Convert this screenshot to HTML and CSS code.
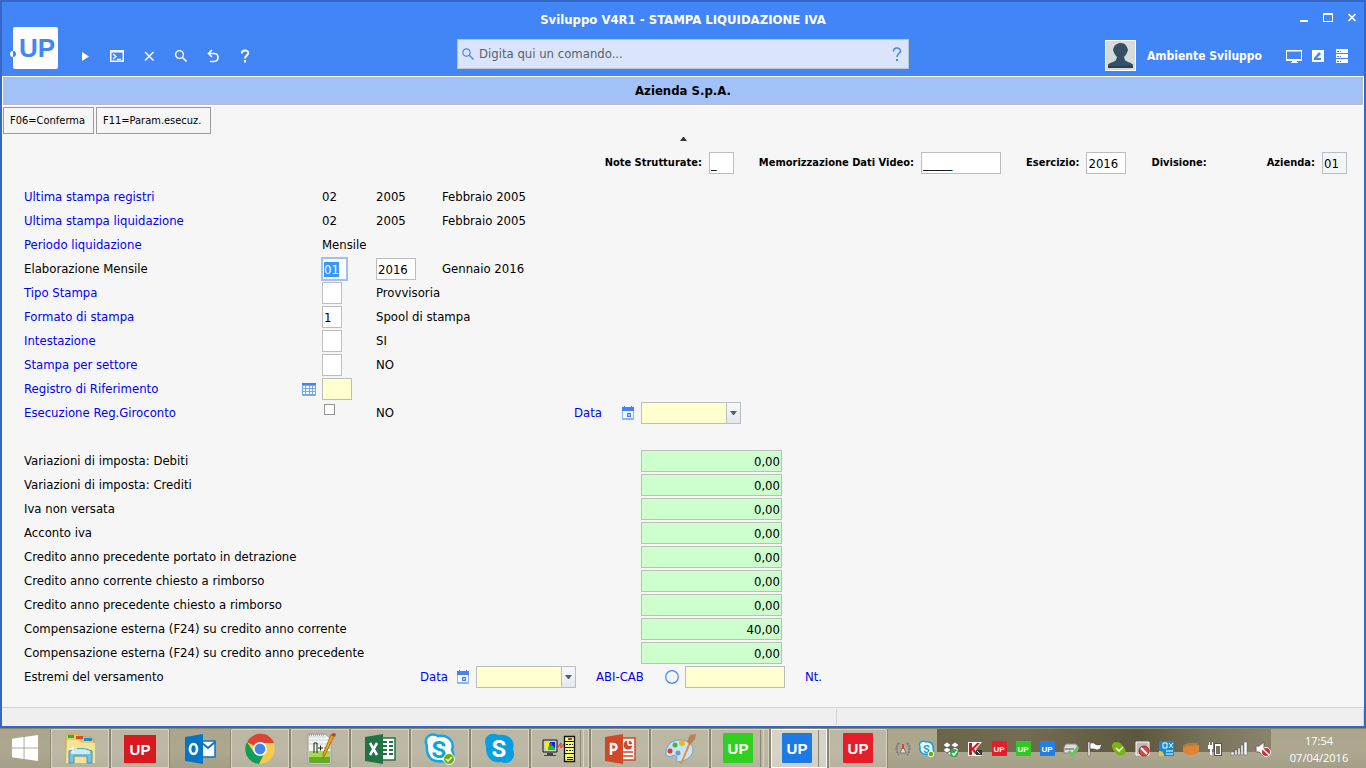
FILE: index.html
```html
<!DOCTYPE html>
<html lang="it">
<head>
<meta charset="utf-8">
<title>Sviluppo V4R1 - STAMPA LIQUIDAZIONE IVA</title>
<link rel="stylesheet" href="styles.css">
</head>
<body>
<svg class="defs" aria-hidden="true">
  <symbol id="calendar" viewBox="0 0 12 14"><path d="M0 2h12v12H0z" fill="#8db5fa"/><path d="M0 1h2V0h1v1h6V0h1v1h2v4H0z" fill="#3f83f5"/><path d="M1 5h10v7H1z" fill="#f5f7fc"/><path d="M5 7h4v4H5z" fill="#3f83f5"/><path d="M6 8h2v2H6z" fill="#a9c7fa"/></symbol>
  <symbol id="arrow" viewBox="0 0 7 4"><path d="M0 0h7L4 4H3z" fill="#585e66"/></symbol>
</svg>
<main class="window">
  <header class="header">
    <div class="brand">
      <svg class="logo" viewBox="0 0 49 42" role="img" aria-label="UP"><rect x="3" width="45" height="42" rx="2" fill="#fff"/><circle cx="3" cy="27" r="3" fill="#fff"/><path d="M3 24a3 3 0 0 1 0 6z" fill="#4285f6"/><text x="9" y="30" class="logo-text">UP</text></svg>
      <nav class="toolbar" aria-label="Strumenti">
        <button class="tool" aria-label="Esegui"><svg viewBox="0 0 16 16"><path d="M5 4v9l7-4.500z" fill="#fff"/></svg></button>
        <button class="tool" aria-label="Terminale"><svg viewBox="0 0 16 16"><path d="M1 2h14v12H1zM2.500 4.500v8h11v-8z" fill="#fff" fill-rule="evenodd"/><path d="M4 6l3 2.500L4 11M8 11.500h4" fill="none" stroke="#fff" stroke-width="1.300"/></svg></button>
        <button class="tool" aria-label="Chiudi"><svg viewBox="0 0 16 16"><path d="M4 4l8.500 8.500M12.500 4L4 12.500" stroke="#fff" stroke-width="1.500"/></svg></button>
        <button class="tool" aria-label="Cerca"><svg viewBox="0 0 16 16"><circle cx="6.500" cy="6.500" r="3.900" fill="none" stroke="#fff" stroke-width="1.400"/><path d="M9 9l4.500 4.500" stroke="#fff" stroke-width="1.700"/></svg></button>
        <button class="tool" aria-label="Annulla"><svg viewBox="0 0 16 16"><path d="M3.500 5.500H9a3.800 3.800 0 0 1 0 8H5" fill="none" stroke="#fff" stroke-width="1.700"/><path d="M7 2L3.500 5.500 7 9" fill="none" stroke="#fff" stroke-width="1.500"/></svg></button>
        <button class="tool" aria-label="Aiuto"><svg viewBox="0 0 16 16"><path d="M4.800 5.500c0-4 6.500-4 6.500-.4C11.300 7.500 8 7.500 8 10.500" fill="none" stroke="#fff" stroke-width="1.900"/><path d="M7 12h2v2.500H7z" fill="#fff"/></svg></button>
      </nav>
    </div>
    <h1 class="title">Sviluppo V4R1 - STAMPA LIQUIDAZIONE IVA</h1>
    <div class="window-controls">
      <button class="control" aria-label="Riduci"><svg viewBox="0 0 12 12"><path d="M2 9h8v2H2z" fill="#fff"/></svg></button>
      <button class="control" aria-label="Ingrandisci"><svg viewBox="0 0 12 12"><path d="M1 2h10v9H1zM2 4v6h8V4z" fill="#fff" fill-rule="evenodd"/></svg></button>
      <button class="control" aria-label="Chiudi finestra"><svg viewBox="0 0 12 12"><path d="M2.500 3l7 7M9.500 3l-7 7" stroke="#fff" stroke-width="1.700"/></svg></button>
    </div>
    <div class="search">
      <svg class="search-icon" viewBox="0 0 12 12"><circle cx="4.500" cy="4.500" r="3.700" fill="none" stroke="#4285f6" stroke-width="1.200"/><path d="M7.300 7.300L11.500 11.500" stroke="#4285f6" stroke-width="1.500"/></svg>
      <input class="search-input" type="text" aria-label="Comando" placeholder="Digita qui un comando...">
      <button class="search-help" aria-label="Aiuto comandi"><svg viewBox="0 0 10 14"><path d="M1.500 4.500c0-4.600 7-4.300 7-.7C8.500 6.600 5 6.500 5 10" fill="none" stroke="#4285f6" stroke-width="1.500"/><path d="M4 12h2v2H4z" fill="#4285f6"/></svg></button>
    </div>
    <div class="user">
      <svg class="avatar" viewBox="0 0 31 31"><path d="M0 0h31v31H0z" fill="#fff"/><path d="M1 1h29v29H1z" fill="#d9dadb"/><path d="M3 28v-3c0-2 7-3 8-5l1-3c-2-2-3-4-4-7 1-5 4-7 8-7s6 3 7 7c-1 3-2 5-4 7l1 3c1 2 8 3 8 5v3z" fill="#345064"/><path d="M3 26h25v2H3z" fill="#2a4052"/></svg>
      <span class="user-name">Ambiente Sviluppo</span>
      <button class="control" aria-label="Schermo"><svg viewBox="0 0 16 16"><path d="M0 2h16v11h-5v1h1v1H5v-1h1v-1H0zM1 3.500V11h14V3.500z" fill="#fff" fill-rule="evenodd"/></svg></button>
      <button class="control" aria-label="Modifica"><svg viewBox="0 0 16 16"><path d="M2 2h12v12H2z" fill="#fff"/><path d="M4 12v-2l5-6 2 2-4 4h4v2z" fill="#4285f6"/></svg></button>
      <button class="control" aria-label="Server"><svg viewBox="0 0 16 16"><path d="M2 1h12v4H2zM2 6h12v4H2zM2 11h12v4H2z" fill="#fff"/><path d="M3 3h2v1H3zM6 3h1v1H6zM3 8h2v1H3zM6 8h1v1H6zM3 13h2v1H3zM6 13h1v1H6z" fill="#4285f6"/></svg></button>
    </div>
  </header>

  <h2 class="company">Azienda S.p.A.</h2>
  <div class="actions">
    <button class="action">F06=Conferma</button>
    <button class="action action-wide">F11=Param.esecuz.</button>
  </div>
  <button class="collapse" aria-label="Comprimi"><svg viewBox="0 0 7 4"><path d="M0 4h7L4 0H3z" fill="#333"/></svg></button>

  <form class="content">
    <div class="context">
      <div class="context-item"><label for="note">Note Strutturate:</label><input class="field w-25" id="note" value="_"></div>
      <div class="context-item"><label for="memo">Memorizzazione Dati Video:</label><input class="field w-80" id="memo" value="_____"></div>
      <div class="context-item"><label for="esercizio">Esercizio:</label><input class="field w-40" id="esercizio" value="2016"></div>
      <div class="context-item context-division"><span>Divisione:</span></div>
      <div class="context-item"><label for="azienda">Azienda:</label><input class="field w-25 readonly" id="azienda" value="01" readonly></div>
    </div>

    <section class="rows">
      <div class="row"><span class="link">Ultima stampa registri</span><span></span><span>02</span><span>2005</span><span>Febbraio 2005</span></div>
      <div class="row"><span class="link">Ultima stampa liquidazione</span><span></span><span>02</span><span>2005</span><span>Febbraio 2005</span></div>
      <div class="row"><span class="link">Periodo liquidazione</span><span></span><span>Mensile</span></div>
      <div class="row"><label for="mese">Elaborazione Mensile</label><span></span><input class="field w-25 current" id="mese" value="01"><input class="field w-40" aria-label="Anno" value="2016"><span>Gennaio 2016</span></div>
      <div class="row"><label class="link" for="tipo">Tipo Stampa</label><span></span><input class="field w-20" id="tipo"><span>Provvisoria</span></div>
      <div class="row"><label class="link" for="formato">Formato di stampa</label><span></span><input class="field w-20" id="formato" value="1"><span>Spool di stampa</span></div>
      <div class="row"><label class="link" for="intestazione">Intestazione</label><span></span><input class="field w-20" id="intestazione"><span>SI</span></div>
      <div class="row"><label class="link" for="settore">Stampa per settore</label><span></span><input class="field w-20" id="settore"><span>NO</span></div>
      <div class="row"><label class="link" for="registro">Registro di Riferimento</label><svg class="grid-icon" viewBox="0 0 14 13"><rect width="14" height="13" rx="1" fill="#78a7f8"/><path d="M0 0h14v2H0z" fill="#3f83f5"/><path d="M1 3h2v2H1zM4 3h3v2H4zM8 3h2v2H8zM11 3h2v2h-2zM1 6h2v2H1zM4 6h3v2H4zM8 6h2v2H8zM11 6h2v2h-2zM1 9h2v2H1zM4 9h3v2H4zM8 9h2v2H8zM11 9h2v2h-2z" fill="#f6f9ff"/></svg><input class="field w-30 yellow" id="registro"></div>
      <div class="row"><label class="link" for="giroconto">Esecuzione Reg.Giroconto</label><span></span><input class="check" type="checkbox" id="giroconto"><span>NO</span><span></span><label class="link" for="data1">Data</label><svg class="calendar"><use href="#calendar"/></svg><span class="combo"><select class="select" id="data1"><option></option></select><span class="combo-arrow"><svg><use href="#arrow"/></svg></span></span></div>
    </section>

    <section class="amounts">
      <label for="a1">Variazioni di imposta: Debiti</label><input class="field amount" id="a1" value="0,00">
      <label for="a2">Variazioni di imposta: Crediti</label><input class="field amount" id="a2" value="0,00">
      <label for="a3">Iva non versata</label><input class="field amount" id="a3" value="0,00">
      <label for="a4">Acconto iva</label><input class="field amount" id="a4" value="0,00">
      <label for="a5">Credito anno precedente portato in detrazione</label><input class="field amount" id="a5" value="0,00">
      <label for="a6">Credito anno corrente chiesto a rimborso</label><input class="field amount" id="a6" value="0,00">
      <label for="a7">Credito anno precedente chiesto a rimborso</label><input class="field amount" id="a7" value="0,00">
      <label for="a8">Compensazione esterna (F24) su credito anno corrente</label><input class="field amount" id="a8" value="40,00">
      <label for="a9">Compensazione esterna (F24) su credito anno precedente</label><input class="field amount" id="a9" value="0,00">
    </section>

    <div class="payment">
      <span>Estremi del versamento</span>
      <label class="link" for="data2">Data</label><svg class="calendar"><use href="#calendar"/></svg><span class="combo"><select class="select" id="data2"><option></option></select><span class="combo-arrow"><svg><use href="#arrow"/></svg></span></span>
      <label class="link" for="abi">ABI-CAB</label><svg class="circle" viewBox="0 0 14 14"><circle cx="7" cy="7" r="6.300" fill="none" stroke="#4285f6" stroke-width="1.200"/></svg><input class="field w-100 yellow" id="abi">
      <span class="link">Nt.</span>
    </div>
  </form>
  <footer class="status"><span class="status-left"></span><span class="status-right"></span></footer>
</main>

<div class="taskbar">
  <button class="start" aria-label="Start"><svg viewBox="0 0 28 28"><path d="M0 4l12-2v11H0zM13 2l14-2v13H13zM0 14h12v11L0 23zM13 14h14v13l-14-2z" fill="#fff"/></svg></button>
  <div class="apps">
    <button class="app" aria-label="Esplora file"><svg viewBox="0 0 32 32"><path d="M2 4q0-3 3-3h9l2 3h10v3h4v22H2z" fill="#e8cc66" stroke="#c6a646"/><path d="M4 2h6v3H4z" fill="#1fb53c"/><path d="M12 3h7v3h-7z" fill="#d84b25"/><path d="M20 5h8v3h-8z" fill="#258bd0"/><path d="M3 7h12l2 3h14v20H2z" fill="#f6e496"/><path d="M3 24l5-9 20 2 2 8" fill="#f1d873"/><path d="M5 18q12-5 23 0v12h-5v-7H10v7H5z" fill="#79bfdf" stroke="#4198c5"/><path d="M7 18q10-4 19 0v3H7z" fill="#c9edfa"/><path d="M9 13v7M6 16h7" stroke="#fff"/></svg></button>
    <button class="app" aria-label="UP"><svg viewBox="0 0 32 32"><path d="M0 2h32v28H0z" fill="#da1820"/><text x="16" y="22" class="up">UP</text></svg></button>
    <button class="app plain" aria-label="Outlook"><svg viewBox="0 0 32 32"><path d="M18 8h13v16H18z" fill="#fff" stroke="#0874c5" stroke-width="1.500"/><path d="M18 10l6 5 7-6" fill="none" stroke="#0874c5" stroke-width="2"/><path d="M1 4l18-3v30L1 28z" fill="#0874c5"/><ellipse cx="9.500" cy="16" rx="3.500" ry="5" fill="none" stroke="#fff" stroke-width="2.700"/></svg></button>
    <button class="app" aria-label="Chrome"><svg viewBox="0 0 32 32"><circle cx="16" cy="16" r="14.700" fill="#f8cc4b"/><path d="M16 16L3 9C10-3 26-1 30 10H16z" fill="#db4437"/><path d="M3 9c-5 9 1 21 12 22l6-12-12-1z" fill="#0f9d58"/><circle cx="16" cy="16" r="7" fill="#fff"/><circle cx="16" cy="16" r="5.400" fill="#4285f4"/></svg></button>
    <button class="app" aria-label="Notepad++"><svg viewBox="0 0 32 32"><path d="M4 1h17l6 5v25H4z" fill="#f5f8f3" stroke="#999"/><path d="M5 18h21v12H5z" fill="#a4d94f"/><path d="M5 24h21v6H5z" fill="#65ac20"/><path d="M5 4h17M5 7h21M5 11h21" stroke="#c6d0da"/><path d="M5 2h16" stroke="#666" stroke-dasharray="1 1"/><path d="M10 20V10h3v10M14 15h5m-2.500-2.500v5m4-2.500h5m-2.500-2.500v5" fill="none" stroke="#172c12"/><path d="M30 3L21 22l-2 3v-4l8-19z" fill="#eca51f" stroke="#a97316"/><path d="M27 2l2-2 3 1-1 3z" fill="#bf3b40"/></svg></button>
    <button class="app" aria-label="Excel"><svg viewBox="0 0 32 32"><path d="M17 5h14v22H17z" fill="#fff" stroke="#217346" stroke-width="1.500"/><path d="M19 8h4v2h-4zM25 8h4v2h-4zM19 12h4v2h-4zM25 12h4v2h-4zM19 16h4v2h-4zM25 16h4v2h-4zM19 20h4v2h-4zM25 20h4v2h-4z" fill="#217346"/><path d="M1 4l18-3v30L1 28z" fill="#217346"/><path d="M6 10l7 12M13 10L6 22" stroke="#fff" stroke-width="2.500"/></svg></button>
    <button class="app" aria-label="Skype for Business"><svg viewBox="0 0 32 32"><path d="M3 13C-1 4 7-1 14 3c10-2 17 6 14 14 4 8-3 15-11 11C8 30 2 23 3 13z" fill="#fff" stroke="#0ba9e5" stroke-width="2.500"/><text x="15" y="25" class="skype blue">S</text><circle cx="25" cy="26" r="5.500" fill="#6aae0b" stroke="#fff"/><path d="M22 26l2 2 4-4" stroke="#fff" stroke-width="1.500" fill="none"/></svg></button>
    <button class="app" aria-label="Skype"><svg viewBox="0 0 32 32"><path d="M2 13C-2 4 7-2 14 2c11-2 18 6 15 14 4 9-4 17-12 13C8 31 1 24 2 13z" fill="#079fe0"/><text x="15" y="24" class="skype">S</text></svg></button>
    <button class="app stacked" aria-label="Emulatore"><svg viewBox="0 0 32 32"><path d="M1 7h14v12H1z" fill="#ccc" stroke="#111"/><path d="M4 9h9v8H4z" fill="#0027f2"/><path d="M4 9h4v8H4z" fill="#fff500"/><path d="M6 14l3-3 4 4v2H6z" fill="#22bf30"/><path d="M7 10h3v3H7z" fill="#e02c24"/><path d="M5 20h6v2h3v1H2v-1h3z" fill="#444"/><path d="M16 14l3-4v5l3-4" stroke="#ef2519" fill="none"/><path d="M22.500 3.500h10v25h-10z" fill="#ffff7c" stroke="#111" stroke-width="1.300"/><path d="M23 8.500h9M23 14.500h9M23 20.500h9M25 24.500h6M25 26.500h6" stroke="#111"/><path d="M24 11.500h7M24 17.500h7" stroke="#111" stroke-dasharray="2 1"/><path d="M26 5h4v2h-4z" fill="#dc2a1d"/></svg></button>
    <button class="app" aria-label="PowerPoint"><svg viewBox="0 0 32 32"><path d="M17 5h14v22H17z" fill="#fff" stroke="#d24726" stroke-width="1.500"/><circle cx="24" cy="12" r="4.500" fill="#d24726"/><path d="M24 12V7M24 12h5" stroke="#fff" stroke-width="1.500"/><path d="M19 19h10M19 23h10" stroke="#d24726" stroke-width="1.500"/><path d="M1 4l18-3v30L1 28z" fill="#d24726"/><path d="M7 22V11h2.500a3 3 0 0 1 0 6H7" fill="none" stroke="#fff" stroke-width="2.500"/></svg></button>
    <button class="app" aria-label="Paint"><svg viewBox="0 0 32 32"><path d="M3 15C6 4 29 4 29 17c0 10-17 14-17 10 3-3-1-6-4-4-5 2-8-2-5-8z" fill="#c8e4f4" stroke="#67a7c8"/><circle cx="6" cy="18" r="2.500" fill="#df3b2f"/><circle cx="11" cy="12" r="2.500" fill="#46b444"/><circle cx="18" cy="10" r="3" fill="#f2b421"/><circle cx="14" cy="20" r="2.500" fill="#719bb5"/><path d="M16 31l9-22 2 1-9 21z" fill="#e8903e"/><path d="M23 9l3-7 6-1-1 5-5 6z" fill="#b88351"/></svg></button>
    <button class="app stacked" aria-label="UP verde"><svg viewBox="0 0 32 32"><rect x="1" width="30" height="30" rx="1" fill="#2fd020"/><text x="16" y="21" class="up">UP</text></svg></button>
    <button class="app stacked active" aria-label="UP blu"><svg viewBox="0 0 32 32"><rect x="1" width="30" height="30" rx="1" fill="#1d7ae5"/><text x="16" y="21" class="up">UP</text></svg></button>
    <button class="app" aria-label="UP rosso"><svg viewBox="0 0 32 32"><rect x="1" width="30" height="30" rx="1" fill="#e51c2a"/><text x="16" y="21" class="up">UP</text></svg></button>
  </div>
  <div class="tray">
    <svg viewBox="0 0 16 16"><path d="M4 2Q-1 7 4 14M12 2q5 5 0 12" fill="none" stroke="#777" stroke-width="2" stroke-dasharray="2 1"/><path d="M5 12l3-7 3 7z" fill="#ddd" stroke="#777"/><path d="M7 3h2v5H7z" fill="#cf493f"/></svg>
    <svg viewBox="0 0 16 16"><path d="M1 6C-1 1 4-1 7 1c5-1 8 3 7 7 2 4-2 7-6 5-4 1-8-2-7-7z" fill="#fff" stroke="#06a6df" stroke-width="1.500"/><text x="7.500" y="12" class="skype-small">S</text><circle cx="12" cy="13" r="2.800" fill="#6aae0b" stroke="#fff"/></svg>
    <svg viewBox="0 0 16 16"><path d="M4 1l4 3-4 3-4-3zM12 1l4 3-4 3-4-3zM4 6l4 3-4 3-4-3zM12 6l4 3-4 3-4-3zM4 12l4-2 4 2-4 3z" fill="#fff" stroke="#333" stroke-width=".5"/><circle cx="11" cy="12" r="4" fill="#28a84a"/><path d="M9 12l2 2 3-4" fill="none" stroke="#fff" stroke-width="1.500"/></svg>
    <svg viewBox="0 0 16 16"><path d="M1 1h14L9 8l6 7H1z" fill="#fff"/><path d="M2 2h3v5l5-5h3L7 8l4 5H8L5 9v5H2z" fill="#cf1920"/><path d="M9 9h6v5H9z" fill="#333"/><path d="M10 10l3 3" stroke="#fff"/></svg>
    <svg viewBox="0 0 16 16"><path d="M1 0h15v15H1z" fill="#e51c2a"/><text x="8" y="11" class="up-small">UP</text></svg>
    <svg viewBox="0 0 16 16"><path d="M1 0h15v15H1z" fill="#2fc923"/><text x="8" y="11" class="up-small">UP</text></svg>
    <svg viewBox="0 0 16 16"><path d="M1 0h15v15H1z" fill="#237fe8"/><text x="8" y="11" class="up-small">UP</text></svg>
    <svg viewBox="0 0 16 16"><path d="M3 3h10l3 4-3 5H1V6z" fill="#ddd" stroke="#888"/><path d="M2 8h9" stroke="#999" stroke-width="2"/><path d="M6 10l3 4 6-8" fill="none" stroke="#55d052" stroke-width="2.500"/></svg>
    <svg viewBox="0 0 16 16"><path d="M1 1h2v14H1z" fill="#fff" stroke="#444" stroke-width=".5"/><path d="M3 2q4-1 5 1 3 2 7 0l-2 5q-3 2-6 0H3z" fill="#fff" stroke="#444" stroke-width=".7"/></svg>
    <svg viewBox="0 0 16 16"><path d="M2 2q6-3 9 2 5 5 3 9-6 4-10-2-5-5-2-9z" fill="#78b711"/><path d="M5 7l3 3 4-4" fill="none" stroke="#fff" stroke-width="1.500"/></svg>
    <svg viewBox="0 0 16 16"><path d="M1 1h13v13H1z" fill="#bbb" stroke="#fff"/><circle cx="9" cy="10" r="5" fill="#d64747" stroke="#a92727"/><path d="M6 7l6 6" stroke="#fff" stroke-width="2"/></svg>
    <svg viewBox="0 0 16 16"><path d="M0 0h15v15H0z" fill="#178cd5"/><path d="M4 2h4v5H4zM10 2l4 5M14 2l-4 5M7 10h7M7 13h7" fill="none" stroke="#fff"/><path d="M0 10q5 0 5 5H0z" fill="#edc529"/></svg>
    <svg viewBox="0 0 16 16"><path d="M0 5q3-4 15-3v5H0z" fill="#a98440"/><path d="M0 7q8-3 16-3v6q-2 4-8 4t-8-4z" fill="#e08335"/></svg>
    <svg viewBox="0 0 16 16"><path d="M7 2h8v13H7z" fill="#555"/><path d="M8 3h6v11H8zM1 4h5v4H5v6H3V8H1zM2 1h1v3H2zM5 1h1v3H5z" fill="#fff"/><path d="M9 5h4v8H9z" fill="#777258"/></svg>
    <svg viewBox="0 0 16 16"><path d="M0 11h3v3H0zM4 9h2v5H4zM7 7h2v7H7zM10 4h2v10h-2zM13 1h3v13h-3z" fill="#fff" stroke="#555" stroke-width=".5"/></svg>
    <svg viewBox="0 0 16 16"><path d="M1 5h3l5-4v14l-5-4H1z" fill="#fff" stroke="#666"/><circle cx="11" cy="11" r="4.500" fill="#dc2929" stroke="#fff"/><path d="M8 8l6 6" stroke="#fff" stroke-width="1.500"/></svg>
  </div>
  <div class="clock"><time>17:54</time><span>07/04/2016</span></div>
</div>
<script src="page.js"></script>
</body>
</html>
```
FILE: styles.css
```css
* { box-sizing: border-box; }
body { margin: 0; min-height: 100vh; display: flex; flex-direction: column; font: 13px/16px "DejaVu Sans Condensed", "Noto Sans", sans-serif; color: #000; }
button, input, select { font: inherit; color: inherit; border-radius: 0; margin: 0; }
button { padding: 0; border: 0; background: none; }
svg { display: block; overflow: visible; flex: none; }
.defs { position: absolute; width: 0; height: 0; }

.window { flex: 1; display: flex; flex-direction: column; border: 2px solid #3468c4; background: #f6f6f6; }
.header { display: grid; grid-template-columns: 1fr 452px 1fr; grid-template-rows: 37px 37px; background: #4285f6; color: #fff; }
.brand { grid-row: 1 / 3; display: flex; align-items: flex-end; padding: 0 0 7px 8px; gap: 10px; }
.logo { width: 49px; height: 42px; }
.logo-text { font: bold 26px "Liberation Sans", sans-serif; fill: #4285f6; }
.toolbar { display: flex; }
.tool { width: 32px; height: 26px; display: grid; place-items: center; }
.tool svg { width: 16px; height: 16px; }
.title { margin: 0; font-size: 13px; line-height: 35px; text-align: center; white-space: nowrap; }
.window-controls { display: flex; justify-content: flex-end; align-items: center; padding-bottom: 7px; }
.control { width: 24px; height: 24px; display: grid; place-items: center; }
.window-controls svg { width: 12px; height: 12px; }
.search { height: 30px; display: flex; align-items: center; gap: 5px; padding: 0 6px 0 4px; border: 1px solid #bfc3ca; background: #dae5fd; color: #555; }
.search-icon { width: 12px; height: 12px; }
.search-input { flex: 1; min-width: 0; padding: 0; border: 0; background: none; outline: 0; }
.search-input::placeholder { color: #5c5f66; opacity: 1; }
.search-help svg { width: 10px; height: 14px; }
.user { display: flex; justify-content: flex-end; align-items: center; padding: 0 10px 4px 0; }
.user .control svg { width: 16px; height: 16px; }
.avatar { width: 31px; height: 31px; }
.user-name { margin: 0 20px 0 11px; font-size: 12px; font-weight: bold; }

.company { margin: 1px 1px 0; border: 1px solid #bdbdbd; background: #a2c1f8; font-size: 13px; line-height: 26px; text-align: center; outline: 1px solid #fff; }
.actions { display: flex; gap: 2px; padding: 2px 1px 0; }
.action { height: 27px; width: 91px; padding: 0 6px; border: 1px solid #9c9c9c; font-size: 11px; text-align: left; white-space: nowrap; }
.action-wide { width: 115px; }
.collapse { display: grid; place-items: center; height: 10px; margin-bottom: 8px; }
.collapse svg { width: 7px; height: 4px; }

.content { flex: 1; }
.context { display: flex; justify-content: flex-end; gap: 25px; padding-right: 17px; font-size: 11px; font-weight: bold; }
.context-item { display: flex; align-items: center; gap: 7px; white-space: nowrap; }
.context-item .field { font-size: 13px; font-weight: normal; }
.context-division { padding-right: 35px; }
.field { height: 22px; padding: 0 1px; border: 1px solid #bdbdbd; background: #fff; outline: 0; }
.w-20 { width: 20px; }
.w-25 { width: 25px; }
.w-30 { width: 30px; }
.w-40 { width: 40px; }
.w-80 { width: 80px; }
.w-100 { width: 100px; }
.readonly { background: #f4f5f7; border-color: #b8bdc6; }
.yellow { background: #ffffcf; }
.current { border-color: #9fbffa; outline: 1px solid #9fbffa; }
.current::selection { background: #3399ff; color: #fff; }
.link { color: #00f; }

.rows { padding: 11px 0 24px 22px; }
.row { display: grid; grid-template-columns: 278px 20px 54px 66px 132px 48px 19px auto; align-items: center; justify-content: start; height: 24px; white-space: nowrap; }
.grid-icon { width: 14px; height: 13px; }
.check { appearance: none; align-self: start; width: 11px; height: 11px; margin: 3px 2px; border: 1px solid #949494; background: #fff; }
.calendar { width: 12px; height: 14px; }
.combo { display: flex; position: relative; width: 100px; }
.select { appearance: none; width: 100%; height: 22px; border: 1px solid #bdbdbd; background: #ffffcf; }
.combo-arrow { position: absolute; inset: 1px 1px 1px auto; width: 14px; display: grid; place-items: center; border-left: 1px solid #bdbdbd; background: linear-gradient(#f6f9fc, #e4e8ed); pointer-events: none; }
.combo-arrow svg { width: 7px; height: 4px; }

.amounts { display: grid; grid-template-columns: 617px 141px; grid-auto-rows: 24px; align-items: center; padding-left: 22px; }
.amount { width: 100%; background: #cfc; text-align: right; }
.payment { display: grid; grid-template-columns: 396px 37px 19px 120px 69px 20px 120px auto; justify-content: start; align-items: center; height: 24px; padding-left: 22px; white-space: nowrap; }
.circle { width: 14px; height: 14px; }
.status { display: grid; grid-template-columns: 835px 1fr; height: 19px; padding: 1px 0; border-top: 1px solid #d3d3d3; background: #efefef; }
.status-left, .status-right { border-right: 1px solid #d3d3d3; }

.taskbar { display: flex; height: 40px; background: linear-gradient(#aba58c, #aea890 60%, #a39e87); border-top: 1px solid #8b866f; }
.start { width: 50px; display: grid; place-items: center; }
.start svg { width: 27px; height: 27px; }
.apps { display: flex; gap: 2px; padding-left: 1px; }
.app { position: relative; width: 58px; display: grid; place-items: center; border: 1px solid #d7d2c2; background: rgba(255, 255, 255, .2); outline: 1px solid #8c8771; }
.app svg { width: 32px; height: 32px; }
.app.plain { border-color: transparent; background: none; outline: 0; }
.stacked { padding-right: 4px; }
.stacked::after { content: ""; position: absolute; inset: 0 4px 0 auto; border-left: 1px solid #8c8771; border-right: 1px solid #d7d2c2; width: 2px; }
.app.active { width: 56px; background: rgba(255, 255, 255, .5); border-color: #fff; }
.up, .up-small { font: bold 15px "Liberation Sans", sans-serif; fill: #fff; text-anchor: middle; }
.up-small { font-size: 8px; }
.skype, .skype-small { font: bold 24px Roboto, sans-serif; fill: #fff; text-anchor: middle; }
.skype.blue, .skype-small { fill: #06a6df; }
.skype-small { font-size: 11px; }
.tray { flex: 1; display: flex; justify-content: flex-end; align-items: center; gap: 8px; background: linear-gradient(90deg, #6a6449, #756d53 25%, #5d563d 60%, #79725b 80%, #8a846d) right top / 334px 23px no-repeat; }
.tray svg { width: 16px; height: 16px; }
.clock { width: 95px; display: flex; flex-direction: column; align-items: center; justify-content: center; padding-left: 1px; color: #fff; font: 11px/17px "Open Sans", sans-serif; }
```
FILE: page.js
```js
var month = document.getElementById("mese");
month.focus();
month.select();
```
